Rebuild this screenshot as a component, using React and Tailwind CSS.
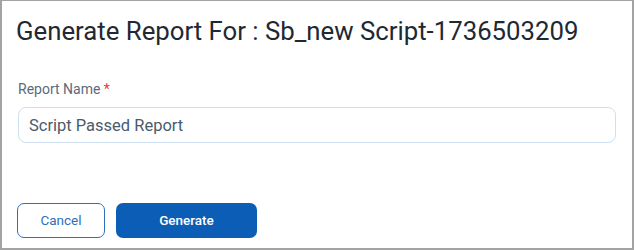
import React, { useState } from 'react';

const App = () => {
    const [reportName, setReportName] = useState('Script Passed Report');

    return (
        <div className="w-[634px] h-[250px] bg-white border-2 border-t border-[#a3a3a3] flex flex-col font-['Roboto',sans-serif]">
            {/* Header */}
            <div className="pl-[14px] pt-[14px]">
                <h1 className="text-[25.75px] leading-[32px] text-[#1f2933]">
                    Generate Report For : Sb_new Script-1736503209
                </h1>
            </div>

            {/* Form */}
            <div className="px-[16px] pt-[34px]">
                <label className="block text-[14px] leading-[16px] text-[#5b6b7b]">
                    Report Name <span className="text-[#e53935]">*</span>
                </label>
                <input
                    value={reportName}
                    onChange={(e) => setReportName(e.target.value)}
                    className="mt-[10px] w-[598px] h-[36px] px-[10px] border border-[#cddff0] rounded-[8px] text-[16.5px] text-[#4a5b6c] outline-none"
                />
            </div>

            {/* Footer */}
            <div className="mt-auto mb-[10px] px-[15px] flex gap-[11px]">
                <button className="w-[88px] h-[35px] border border-[#2f6fb8] rounded-[7px] text-[13.5px] text-[#2f6fb8]">
                    Cancel
                </button>
                <button className="w-[141px] h-[35px] bg-[#0b5db5] rounded-[7px] text-[13.5px] font-medium text-white">
                    Generate
                </button>
            </div>
        </div>
    );
};

export default App;
